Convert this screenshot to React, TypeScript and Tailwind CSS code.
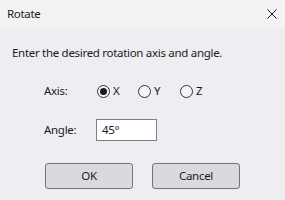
import React from "react";

function Radio({ checked, label, w }: { checked?: boolean; label: string; w: string }) {
  return (
    <div className={`flex items-center ${w}`}>
      <div className="w-[13px] h-[13px] rounded-full border border-[#333333] bg-[#f5f5f7] flex items-center justify-center">
        {checked && <div className="w-[7px] h-[7px] rounded-full bg-[#1a1a1a]" />}
      </div>
      <span className="ml-[3px]">{label}</span>
    </div>
  );
}

export default function App() {
  return (
    <div className="w-[285px] h-[200px] bg-[#eeeef2] font-['Segoe_UI','Noto_Sans',sans-serif] text-[11.5px] tracking-[-0.3px] text-[#1b1b1b] overflow-hidden">
      <div className="h-[27px] bg-[#f3f3f3] flex items-center justify-between pl-[7px] pr-[8px]">
        <span className="leading-[16px]">Rotate</span>
        <svg width="10" height="10" viewBox="0 0 10 10">
          <path d="M0.5 0.5 L9.5 9.5 M9.5 0.5 L0.5 9.5" stroke="#1a1a1a" strokeWidth="1" />
        </svg>
      </div>
      <div className="pt-[18px] px-[12px]">
        <p className="leading-[16px]">Enter the desired rotation axis and angle.</p>
        <div className="mt-[22px] h-[16px] flex items-center leading-[16px]">
          <span className="ml-[32px] w-[53px]">Axis:</span>
          <Radio checked label="X" w="w-[41px]" />
          <Radio label="Y" w="w-[42px]" />
          <Radio label="Z" w="w-[42px]" />
        </div>
        <div className="mt-[20px] h-[22px] flex items-center">
          <span className="ml-[32px] w-[52px]">Angle:</span>
          <div className="w-[61px] h-[22px] bg-white border border-[#7a7f88] flex items-center pl-[5px]">
            45°
          </div>
        </div>
        <div className="mt-[22px] flex">
          <button className="ml-[33px] w-[88px] h-[26px] bg-[#dadadd] border border-[#6e7681] rounded-[3px] flex items-center justify-center">
            OK
          </button>
          <button className="ml-[19px] w-[88px] h-[26px] bg-[#dadadd] border border-[#6e7681] rounded-[3px] flex items-center justify-center">
            Cancel
          </button>
        </div>
      </div>
    </div>
  );
}
